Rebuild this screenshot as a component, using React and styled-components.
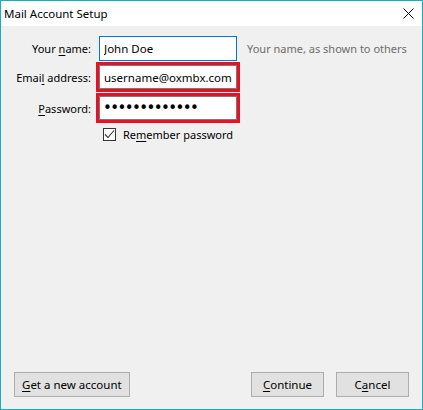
import React from "react";
import styled, { createGlobalStyle } from "styled-components";

const GlobalStyle = createGlobalStyle`
  html, body {
    margin: 0;
    padding: 0;
    background: #f0f0f0;
  }
  * {
    box-sizing: border-box;
  }
`;

const Window = styled.div`
  width: 423px;
  height: 410px;
  display: flex;
  flex-direction: column;
  border: 1px solid #17b0c0;
  background: #f0f0f0;
  font-family: "Noto Sans", "Open Sans", sans-serif;
  font-size: 11px;
  color: #000;
`;

const TitleBar = styled.div`
  height: 25px;
  display: flex;
  align-items: center;
  justify-content: space-between;
  padding: 0 8px 0 3px;
  background: #fff;
`;

const Title = styled.span`
  font-size: 11.5px;
  line-height: 1;
`;

const Body = styled.div`
  flex: 1;
  display: flex;
  flex-direction: column;
`;

const Form = styled.div`
  display: flex;
  flex-direction: column;
  gap: 1px;
  padding-top: 10px;
`;

const Row = styled.div`
  display: flex;
  align-items: center;
`;

const Label = styled.label`
  width: 90px;
  margin-right: 5px;
  text-align: right;
  white-space: nowrap;
`;

const Key = styled.span`
  text-decoration: underline;
  text-underline-offset: 2px;
`;

const Frame = styled.div`
  border-style: solid;
  border-color: ${(p) => (p.$highlight ? "#e81123" : "transparent")};
  border-width: ${(p) => (p.$highlight ? "3px" : "0 3px")};
`;

const Input = styled.input`
  display: block;
  width: 138px;
  height: ${(p) => (p.$focused ? "25px" : "24px")};
  margin: 0;
  padding: 0 4px;
  border: 1px solid ${(p) => (p.$focused ? "#0078d7" : "#7a7a7a")};
  background: #fff;
  font-family: inherit;
  font-size: 11.5px;
  color: #000;
  outline: none;
`;

const SecretInput = styled(Input)`
  font-family: "DejaVu Sans", sans-serif;
  font-size: 15px;
  letter-spacing: -1.6px;
  padding-left: 3px;
`;

const Hint = styled.span`
  margin-left: 7px;
  color: #6d6d6d;
  white-space: nowrap;
`;

const CheckRow = styled.label`
  display: flex;
  align-items: center;
  gap: 7px;
  margin: 3px 0 0 102px;
`;

const Box = styled.span`
  width: 13px;
  height: 13px;
  display: flex;
  align-items: center;
  justify-content: center;
  border: 1px solid #333;
  background: #fff;
`;

const Footer = styled.div`
  margin-top: auto;
  display: flex;
  align-items: center;
  padding: 0 13px 12px 13px;
`;

const Spacer = styled.div`
  flex: 1;
`;

const Button = styled.button`
  height: 25px;
  min-width: ${(p) => (p.$wide ? "111px" : "73px")};
  padding: 0 7px;
  margin-left: ${(p) => (p.$gap ? "12px" : "0")};
  border: 1px solid #adadad;
  background: #e1e1e1;
  font-family: inherit;
  font-size: 11.5px;
  color: #000;
`;

const CloseIcon = () => (
  <svg width="11" height="11" viewBox="0 0 11 11">
    <path d="M0.5 0.5 L10.5 10.5 M10.5 0.5 L0.5 10.5" stroke="#000" strokeWidth="1" fill="none" />
  </svg>
);

const Check = () => (
  <svg width="11" height="11" viewBox="0 0 11 11">
    <path d="M1 5.5 L4 8.5 L10 1.5" stroke="#333" strokeWidth="1.1" fill="none" />
  </svg>
);

export default function App() {
  return (
    <>
      <GlobalStyle />
      <Window>
        <TitleBar>
          <Title>Mail Account Setup</Title>
          <CloseIcon />
        </TitleBar>
        <Body>
          <Form>
            <Row>
              <Label>
                Your <Key>n</Key>ame:
              </Label>
              <Frame>
                <Input $focused defaultValue="John Doe" />
              </Frame>
              <Hint>Your name, as shown to others</Hint>
            </Row>
            <Row>
              <Label>
                Emai<Key>l</Key> address:
              </Label>
              <Frame $highlight>
                <Input defaultValue="username@oxmbx.com" />
              </Frame>
            </Row>
            <Row>
              <Label>
                <Key>P</Key>assword:
              </Label>
              <Frame $highlight>
                <SecretInput type="password" defaultValue="abcdefghijklm" />
              </Frame>
            </Row>
            <CheckRow>
              <Box>
                <Check />
              </Box>
              <span>
                Re<Key>m</Key>ember password
              </span>
            </CheckRow>
          </Form>
          <Footer>
            <Button $wide>
              <Key>G</Key>et a new account
            </Button>
            <Spacer />
            <Button>
              <Key>C</Key>ontinue
            </Button>
            <Button $gap>
              C<Key>a</Key>ncel
            </Button>
          </Footer>
        </Body>
      </Window>
    </>
  );
}
